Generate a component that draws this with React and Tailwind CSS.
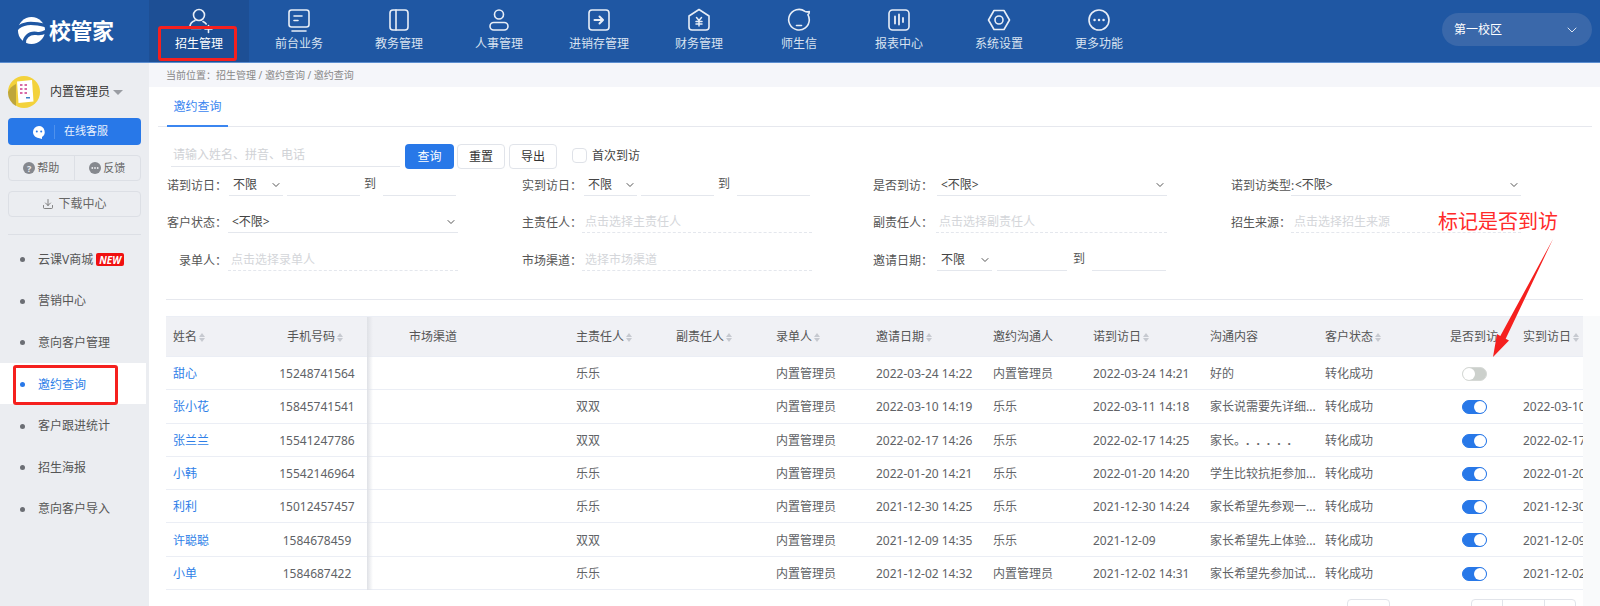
import { ChevronDown, Download } from 'lucide-react';

const font = { fontFamily: '"Noto Sans", "Noto Sans CJK SC", sans-serif' };

const navItems = [
  { label: '招生管理', icon: 'recruit' },
  { label: '前台业务', icon: 'desk' },
  { label: '教务管理', icon: 'book' },
  { label: '人事管理', icon: 'user' },
  { label: '进销存管理', icon: 'stock' },
  { label: '财务管理', icon: 'money' },
  { label: '师生信', icon: 'chat' },
  { label: '报表中心', icon: 'report' },
  { label: '系统设置', icon: 'gear' },
  { label: '更多功能', icon: 'more' },
];

const menuItems = ['云课V商城', '营销中心', '意向客户管理', '邀约查询', '客户跟进统计', '招生海报', '意向客户导入'];

const rows = [
  ['甜心', '15248741564', '乐乐', '内置管理员', '2022-03-24 14:22', '内置管理员', '2022-03-24 14:21', '好的', false, ''],
  ['张小花', '15845741541', '双双', '内置管理员', '2022-03-10 14:19', '乐乐', '2022-03-11 14:18', '家长说需要先详细...', true, '2022-03-10'],
  ['张兰兰', '15541247786', '双双', '内置管理员', '2022-02-17 14:26', '乐乐', '2022-02-17 14:25', 'dots', true, '2022-02-17'],
  ['小韩', '15542146964', '乐乐', '内置管理员', '2022-01-20 14:21', '乐乐', '2022-01-20 14:20', '学生比较抗拒参加...', true, '2022-01-20'],
  ['利利', '15012457457', '乐乐', '内置管理员', '2021-12-30 14:25', '乐乐', '2021-12-30 14:24', '家长希望先参观一...', true, '2021-12-30'],
  ['许聪聪', '1584678459', '双双', '内置管理员', '2021-12-09 14:35', '乐乐', '2021-12-09', '家长希望先上体验...', true, '2021-12-09'],
  ['小单', '1584687422', '乐乐', '内置管理员', '2021-12-02 14:32', '内置管理员', '2021-12-02 14:31', '家长希望先参加试...', true, '2021-12-02'],
];

function NavIcon({ name }) {
  const common = {
    width: 28,
    height: 28,
    viewBox: '0 0 28 28',
    fill: 'none',
    stroke: '#e8eef7',
    strokeWidth: 1.6,
    strokeLinecap: 'round',
    strokeLinejoin: 'round',
  };
  switch (name) {
    case 'recruit':
      return (
        <svg {...common}>
          <circle cx="14" cy="9" r="5.5" />
          <path d="M10 14.5c-3 1-5 3-5 6.5 0 1 .7 1.5 1.5 1.5H16" />
          <path d="M18 15.5c1.5.6 2.5 1.4 3.2 2.5M20 23h7M23.500 19.500v7" />
        </svg>
      );
    case 'desk':
      return (
        <svg {...common}>
          <rect x="4" y="4" width="20" height="17" rx="2.500" />
          <path d="M9 10h8M9 14.500h4M7 25h14" />
        </svg>
      );
    case 'book':
      return (
        <svg {...common}>
          <rect x="5" y="4" width="18" height="20" rx="3" />
          <path d="M11 4v20" />
        </svg>
      );
    case 'user':
      return (
        <svg {...common}>
          <circle cx="14" cy="8.500" r="4.500" />
          <rect x="5" y="16.500" width="18" height="7.500" rx="3.700" />
        </svg>
      );
    case 'stock':
      return (
        <svg {...common}>
          <rect x="4" y="4" width="20" height="20" rx="3" />
          <path d="M9.500 14h8M14.500 10.500l3.500 3.500-3.500 3.500" strokeWidth="2" />
        </svg>
      );
    case 'money':
      return (
        <svg {...common}>
          <path d="M14 3.500 24 10v11a3 3 0 0 1-3 3H7a3 3 0 0 1-3-3V10z" />
          <path d="M11.500 11.500l2.500 3 2.500-3M11 15.500h6M11 18h6M14 14.500v5.500" strokeWidth="1.500" />
        </svg>
      );
    case 'chat':
      return (
        <svg {...common}>
          <path d="M20 5.300A10.300 10.300 0 1 0 24.300 14c0-2-.5-3.800-1.400-5.400 1-.5 1.500-1.500 1.400-3-1.700.4-3.200.4-4.300-.3z" />
          <path d="M11.500 19.500h5" />
        </svg>
      );
    case 'report':
      return (
        <svg {...common}>
          <rect x="4" y="4" width="20" height="20" rx="3.500" />
          <path d="M10 10.500v7M14 8.500v10M18 12v4" strokeWidth="1.800" />
        </svg>
      );
    case 'gear':
      return (
        <svg {...common}>
          <path d="M9 4.500h10L24.500 14 19 23.500H9L3.500 14z" />
          <circle cx="14" cy="14" r="4" />
        </svg>
      );
    default:
      return (
        <svg {...common}>
          <circle cx="14" cy="14" r="10" />
          <path d="M9.500 14h.1M14 14h.1M18.500 14h.1" strokeWidth="2.400" />
        </svg>
      );
  }
}

function Logo() {
  return (
    <div className="flex w-[149px] shrink-0 items-center pb-[2px] pl-[17px]">
      <svg width="29" height="29" viewBox="0 0 30 30" fill="none">
        <circle cx="15" cy="15" r="14" fill="#fff" />
        <path d="M-1 14C5 7 14 6 30 10" stroke="#1f57a3" strokeWidth="3.500" />
        <path d="M8 30c-2-8 5-13 12-12 5 .7 8-.5 10-2" stroke="#1f57a3" strokeWidth="3.500" />
      </svg>
      <span className="ml-[3px] text-[22px] leading-none font-semibold tracking-[-0.5px] text-white">校管家</span>
    </div>
  );
}

function Header() {
  return (
    <header className="relative flex h-[63px] items-stretch border-b border-[#5c8ed0] bg-[#1f57a3]">
      <Logo />
      <nav className="flex">
        {navItems.map((item, i) => (
          <div
            key={item.label}
            className={`flex w-[100px] flex-col items-center pt-[6px] ${i === 0 ? 'bg-[#1d4f95] text-white' : 'text-[#d9e3f1]'}`}
          >
            <NavIcon name={item.icon} />
            <span className="mt-[2px] text-xs leading-[16px]">{item.label}</span>
          </div>
        ))}
      </nav>
      <div className="mt-[13px] mr-2 ml-auto flex h-[33px] w-[150px] items-center justify-between rounded-full bg-[#3a68aa] px-3 text-xs text-white">
        <span>第一校区</span>
        <ChevronDown size={16} strokeWidth={1.5} className="text-[#d9e3f1]" />
      </div>
      {/* 标注框 */}
      <div className="absolute top-[26px] left-[158px] h-[35px] w-[79px] rounded-[3px] border-[3px] border-[#f5201e]" />
    </header>
  );
}

function Avatar() {
  return (
    <svg width="32" height="32" viewBox="0 0 32 32" className="shrink-0">
      <circle cx="16" cy="16" r="16" fill="#f3d23c" />
      <path d="M0 16a16 16 0 0 0 8 14V8A16 16 0 0 0 0 16z" fill="#8a7a3a" opacity="0.5" />
      <path d="M9 5.500 24 4l1.500 21.500-15 1.500z" fill="#fff" />
      <g fill="#d96aa6">
        <rect x="12" y="8" width="2.500" height="2" />
        <rect x="16.500" y="8" width="2.500" height="2" />
        <rect x="12" y="12" width="2.500" height="2" />
        <rect x="16.500" y="12" width="2.500" height="2" />
        <rect x="12" y="16" width="2.500" height="2" />
        <rect x="16.500" y="16" width="2.500" height="2" />
      </g>
      <rect x="18" y="21" width="4" height="1.500" fill="#3b82c4" />
    </svg>
  );
}

function Sidebar() {
  return (
    <aside className="relative w-[149px] shrink-0 bg-[#ebedf1] pt-[13px]">
      <div className="flex items-center pl-2">
        <Avatar />
        <span className="ml-[10px] text-xs leading-none text-[#333]">内置管理员</span>
        <span className="mt-[1px] ml-[3px] h-0 w-0 border-x-[5px] border-t-[5px] border-x-transparent border-t-[#9a9da3]" />
      </div>
      <div className="mx-2 mt-[10px] flex h-[27px] items-center rounded-sm bg-[#2878e8] text-[11px] text-[#eaf2fd]">
        <svg width="14" height="14" viewBox="0 0 14 14" className="ml-6" fill="#fff">
          <path d="M7 1a6 6 0 0 0-6 6c0 3 2.400 5.500 5.500 5.900l3.500 1v-1.900A6 6 0 0 0 7 1z" />
          <circle cx="4.800" cy="6.500" r="1" fill="#2878e8" />
          <circle cx="9.200" cy="6.500" r="1" fill="#2878e8" />
        </svg>
        <span className="ml-2 h-[14px] w-px bg-[#4f91ec]" />
        <span className="ml-[9px]">在线客服</span>
      </div>
      <div className="mx-2 mt-[10px] flex h-[26px] rounded-sm border border-[#dcdfe5] text-[11px] text-[#666]">
        <div className="flex w-1/2 items-center justify-center gap-[2px] border-r border-[#dcdfe5]">
          <span className="flex h-3 w-3 items-center justify-center rounded-full bg-[#85888e] text-[9px] leading-none font-bold text-[#ebedf1]">?</span>
          帮助
        </div>
        <div className="flex w-1/2 items-center justify-center gap-[2px]">
          <svg width="12" height="12" viewBox="0 0 12 12">
            <circle cx="6" cy="6" r="6" fill="#85888e" />
            <circle cx="3.300" cy="6" r="0.900" fill="#ebedf1" />
            <circle cx="6" cy="6" r="0.900" fill="#ebedf1" />
            <circle cx="8.700" cy="6" r="0.900" fill="#ebedf1" />
          </svg>
          反馈
        </div>
      </div>
      <div className="mx-2 mt-[10px] flex h-[26px] items-center justify-center gap-[4px] rounded-sm border border-[#dcdfe5] text-xs text-[#666]">
        <Download size={12} strokeWidth={1.6} />
        下载中心
      </div>
      <div className="mx-2 mt-[17px] border-t border-[#dcdfe5]" />
      <ul className="mt-[3px]">
        {menuItems.map((label, i) => (
          <li
            key={label}
            className={`flex h-[41.6px] w-[146px] items-center pt-[2px] pl-[20px] text-xs ${i === 3 ? 'bg-white text-[#2f7fe8]' : 'text-[#555]'}`}
          >
            <span className={`h-[5px] w-[5px] rounded-full ${i === 3 ? 'bg-[#2878e8]' : 'bg-[#6b6e74]'}`} />
            <span className="ml-[13px]">{label}</span>
            {i === 0 && (
              <span className="ml-[3px] flex h-[13px] items-center rounded-[2px] bg-[#f01010] px-[3px] text-[10px] leading-none font-bold text-white italic">NEW</span>
            )}
          </li>
        ))}
      </ul>
      {/* 标注框 */}
      <div className="absolute top-[302px] left-[13px] h-[40px] w-[105px] rounded-[3px] border-[3px] border-[#f5201e]" />
    </aside>
  );
}

function Label({ children }) {
  return <span className="w-[60px] shrink-0 pt-[3px] text-right text-xs whitespace-nowrap text-[#555]">{children}</span>;
}

function SelectBox({ value, className }) {
  return (
    <div className={`flex h-[24px] items-center justify-between border-b border-[#e4e7ed] pt-[3px] pr-[1px] pl-[4px] text-xs text-[#444] ${className}`}>
      <span>{value}</span>
      <ChevronDown size={12} strokeWidth={2} className="text-[#555]" />
    </div>
  );
}

function PickBox({ placeholder, className }) {
  return (
    <div className={`flex h-[24px] items-center border-b border-dashed border-[#e4e7ed] pt-[3px] pl-[3px] text-xs text-[#d4d6da] ${className}`}>
      {placeholder}
    </div>
  );
}

function DateInput({ className }) {
  return <div className={`h-[24px] border-b border-[#e4e7ed] ${className}`} />;
}

const filterRow = 'grid h-[24px] grid-cols-[355px_351px_358px_1fr] pl-[18px]';

function Filters() {
  return (
    <div>
      <div className="flex h-[25px] items-start pl-[22px]">
        <div className="flex h-[23px] w-[229px] items-center border-b border-[#e4e7ed] pl-[2px] text-xs text-[#d0d2d6]">请输入姓名、拼音、电话</div>
        <button className="ml-[5px] h-[25px] w-[49px] rounded-sm bg-[#2878e8] text-xs text-white">查询</button>
        <button className="ml-[3px] h-[25px] w-[48px] rounded-sm border border-[#e1e4ea] text-xs text-[#333]">重置</button>
        <button className="ml-[4px] h-[25px] w-[48px] rounded-sm border border-[#e1e4ea] text-xs text-[#333]">导出</button>
        <span className="mt-[4px] ml-[15px] h-[15px] w-[15px] rounded-sm border border-[#dfe2e8]" />
        <span className="mt-[4px] ml-[5px] text-xs text-[#444]">首次到访</span>
      </div>

      <div className={`mt-[3px] ${filterRow}`}>
        <div className="flex items-center">
          <Label>诺到访日：</Label>
          <SelectBox value="不限" className="ml-[2px] w-[54px]" />
          <DateInput className="ml-[4px] w-[73px]" />
          <span className="ml-[4px] text-xs text-[#555]">到</span>
          <DateInput className="ml-[7px] w-[73px]" />
        </div>
        <div className="flex items-center">
          <Label>实到访日：</Label>
          <SelectBox value="不限" className="ml-[2px] w-[53px]" />
          <DateInput className="ml-[4px] w-[73px]" />
          <span className="ml-[4px] text-xs text-[#555]">到</span>
          <DateInput className="ml-[7px] w-[73px]" />
        </div>
        <div className="flex items-center">
          <Label>是否到访：</Label>
          <SelectBox value="<不限>" className="ml-[4px] w-[230px]" />
        </div>
        <div className="flex items-center">
          <span className="w-[60px] shrink-0 pt-[3px] text-xs whitespace-nowrap text-[#555]">诺到访类型:</span>
          <SelectBox value="<不限>" className="w-[230px]" />
        </div>
      </div>

      <div className={`mt-[13px] ${filterRow}`}>
        <div className="flex items-center">
          <Label>客户状态：</Label>
          <SelectBox value="<不限>" className="ml-[1px] w-[230px]" />
        </div>
        <div className="flex items-center">
          <Label>主责任人：</Label>
          <PickBox placeholder="点击选择主责任人" className="w-[230px]" />
        </div>
        <div className="flex items-center">
          <Label>副责任人：</Label>
          <PickBox placeholder="点击选择副责任人" className="ml-[3px] w-[231px]" />
        </div>
        <div className="flex items-center">
          <Label>招生来源：</Label>
          <PickBox placeholder="点击选择招生来源" className="w-[230px]" />
        </div>
      </div>

      <div className={`mt-[14px] ${filterRow}`}>
        <div className="flex items-center">
          <Label>录单人：</Label>
          <PickBox placeholder="点击选择录单人" className="ml-[1px] w-[230px]" />
        </div>
        <div className="flex items-center">
          <Label>市场渠道：</Label>
          <PickBox placeholder="选择市场渠道" className="w-[230px]" />
        </div>
        <div className="flex items-center">
          <Label>邀请日期：</Label>
          <SelectBox value="不限" className="ml-[4px] w-[55px]" />
          <DateInput className="ml-[5px] w-[70px]" />
          <span className="ml-[6px] text-xs text-[#555]">到</span>
          <DateInput className="ml-[7px] w-[74px]" />
        </div>
        <div />
      </div>
    </div>
  );
}

function SortIcon() {
  return (
    <span className="ml-[2px] inline-flex flex-col gap-px align-middle">
      <span className="h-0 w-0 border-x-[3.5px] border-b-[4px] border-x-transparent border-b-[#c6c9d0]" />
      <span className="h-0 w-0 border-x-[3.5px] border-t-[4px] border-x-transparent border-t-[#c6c9d0]" />
    </span>
  );
}

function Toggle({ on }) {
  return (
    <span className={`inline-flex h-[14px] w-[25px] -translate-y-px items-center rounded-full border align-middle ${on ? 'justify-end border-[#2878e8] bg-[#2878e8]' : 'justify-start border-[#d6d9d6] bg-[#ccd0cc]'}`}>
      <span className="h-3 w-3 rounded-full bg-white" />
    </span>
  );
}

function Th({ children, sort = true, className = 'px-[7px]' }) {
  return (
    <th className={`border-b border-[#ebeef5] text-xs font-normal whitespace-nowrap text-[#555] ${className}`}>
      {children}
      {sort && <SortIcon />}
    </th>
  );
}

function Td({ children, className = 'text-[#606266]' }) {
  return (
    <td className={`overflow-hidden border-b border-[#ebeef5] px-[7px] pt-[2px] text-xs whitespace-nowrap ${className}`}>
      {children}
    </td>
  );
}

function Note({ text }) {
  // 这一行的沟通内容是一串句号
  if (text === 'dots') {
    return (
      <>
        家长。<span className="font-bold tracking-[7px]">.....</span>
      </>
    );
  }
  return text;
}

function DataTable() {
  return (
    <div className="relative mt-[16px] ml-[17px] w-[1417px] overflow-hidden border-t border-[#ebeef5]">
      <table className="w-[1463px] table-fixed border-separate border-spacing-0 text-left">
        <colgroup>
          <col className="w-[101px]" />
          <col className="w-[100px]" />
          <col className="w-[202px]" />
          <col className="w-[100px]" />
          <col className="w-[100px]" />
          <col className="w-[100px]" />
          <col className="w-[117px]" />
          <col className="w-[100px]" />
          <col className="w-[117px]" />
          <col className="w-[115px]" />
          <col className="w-[114px]" />
          <col className="w-[84px]" />
          <col className="w-[113px]" />
        </colgroup>
        <thead>
          <tr className="h-[40px] bg-[#f0f1f5]">
            <Th>姓名</Th>
            <Th className="pr-[9px] pl-[5px] text-center">手机号码</Th>
            <Th sort={false} className="pl-[42px]">市场渠道</Th>
            <Th>主责任人</Th>
            <Th>副责任人</Th>
            <Th>录单人</Th>
            <Th>邀请日期</Th>
            <Th sort={false}>邀约沟通人</Th>
            <Th>诺到访日</Th>
            <Th sort={false}>沟通内容</Th>
            <Th>客户状态</Th>
            <Th sort={false} className="px-[7px] text-center">是否到访</Th>
            <Th>实到访日</Th>
          </tr>
        </thead>
        <tbody>
          {rows.map((r) => (
            <tr key={r[1]} className="h-[33.3px]">
              <Td className="text-[#2f7fe8]">{r[0]}</Td>
              <Td className="text-center text-[#606266]">{r[1]}</Td>
              <Td />
              <Td>{r[2]}</Td>
              <Td />
              <Td>{r[3]}</Td>
              <Td>{r[4]}</Td>
              <Td>{r[5]}</Td>
              <Td>{r[6]}</Td>
              <Td><Note text={r[7]} /></Td>
              <Td>转化成功</Td>
              <Td className="text-center"><Toggle on={r[8]} /></Td>
              <Td>{r[9]}</Td>
            </tr>
          ))}
        </tbody>
      </table>
      {/* 固定列阴影 */}
      <div className="absolute top-0 bottom-0 left-[201px] w-[6px] bg-gradient-to-r from-[#dfe1e6] to-transparent" />
    </div>
  );
}

export default function App() {
  return (
    <div className="relative h-[606px] w-[1600px] overflow-hidden bg-white" style={font}>
      <Header />
      <div className="flex h-[543px]">
        <Sidebar />
        <main className="relative min-w-0 flex-1">
          <div className="flex h-[24px] items-center bg-[#f5f6fa] pl-[17px] text-[10px] text-[#888]">
            当前位置：招生管理 / 邀约查询 / 邀约查询
          </div>
          <div className="mr-[8px] ml-[9px] flex h-[40px] border-b border-[#e6e8ee] pl-[9px]">
            <div className="flex h-[40px] w-[61px] items-center justify-center border-b-2 border-[#3b86f0] pt-[2px] text-xs text-[#3b86f0]">邀约查询</div>
          </div>
          <div className="mt-[17px]">
            <Filters />
          </div>
          <div className="mt-[28px] mr-[17px] ml-[17px] border-t border-[#e6e8ee]" />
          <DataTable />
          {/* 右侧滚动条轨道 */}
          <div className="absolute top-[253px] right-0 bottom-0 w-[17px] bg-[#f9fafb]" />
          {/* 分页，只露出顶边 */}
          <div className="absolute top-[536px] left-[1198px] h-[20px] w-[43px] rounded-t-sm border border-[#e1e4ea]" />
          <div className="absolute top-[536px] left-[1322px] flex h-[20px] w-[105px] rounded-t-sm border border-[#e1e4ea]">
            <span className="w-[31px] border-r border-[#e1e4ea]" />
            <span className="w-[42px] border-r border-[#e1e4ea]" />
          </div>
        </main>
      </div>

      {/* 红色标注 */}
      <span className="absolute top-[208px] left-[1438px] text-[20px] leading-[28px] text-[#ff2a2a]">标记是否到访</span>
      <svg className="absolute top-[230px] left-[1480px]" width="90" height="135" viewBox="0 0 90 135">
        <path d="M73 9 L25.700 108.800 L29 110.600 L13 127 L17 104 L20.300 106 Z" fill="#f5201e" />
      </svg>
    </div>
  );
}
